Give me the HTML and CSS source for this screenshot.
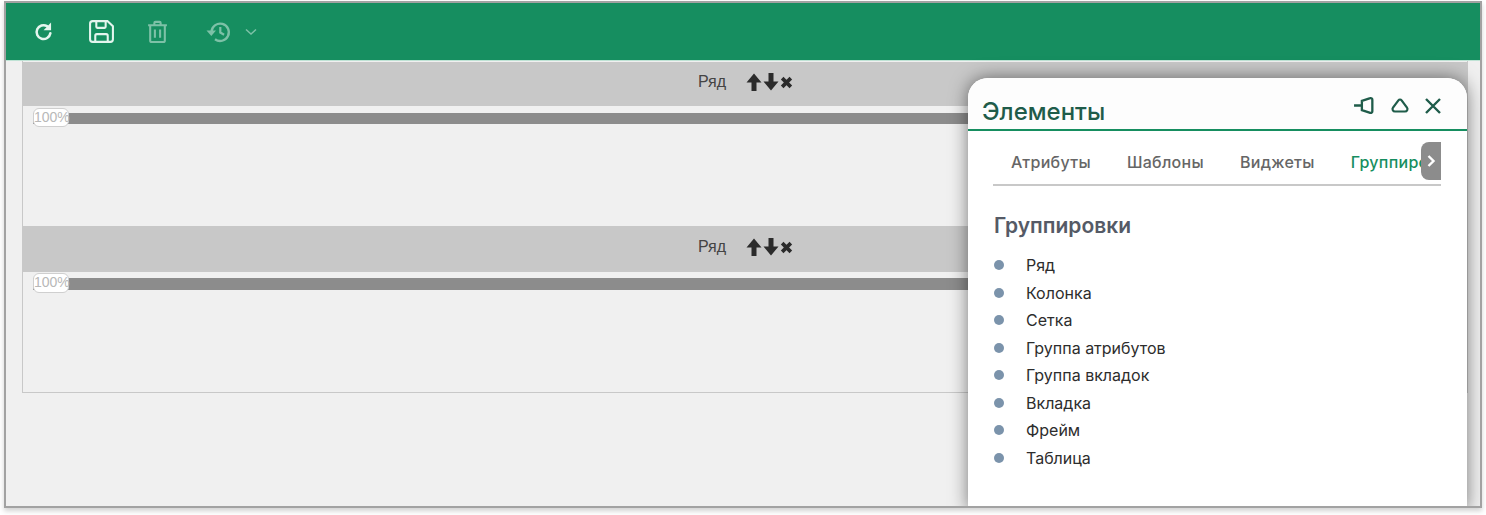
FILE: index.html
```html
<!DOCTYPE html>
<html lang="ru">
<head>
<meta charset="utf-8">
<title>Элементы</title>
<link rel="stylesheet" href="styles.css">
</head>
<body>
<div class="frame">
  <header class="toolbar">
    <svg class="tool tool-refresh" viewBox="0 0 20 20" width="22" height="22"><path d="M15.8 11.2A6.300 6.300 0 1 1 12.800 4.700" fill="none" stroke="currentColor" stroke-width="2.300" stroke-linecap="round"/><path d="M16.400 1.400v7h-6.800z" fill="currentColor"/></svg>
    <svg class="tool tool-save" viewBox="0 0 26 24" width="27" height="25"><path d="M2 4.5A2.5 2.5 0 0 1 4.500 2h14.200L24 7v12.500a2.500 2.500 0 0 1-2.500 2.500h-17A2.500 2.500 0 0 1 2 19.500z M8 2v5.500a1 1 0 0 0 1 1h7a1 1 0 0 0 1-1V2 M7 22v-6a1.500 1.500 0 0 1 1.500-1.500h9A1.500 1.500 0 0 1 19 16v6" fill="none" stroke="currentColor" stroke-width="2"/></svg>
    <svg class="tool tool-dim tool-trash" viewBox="0 0 20 22" width="21" height="23"><path d="M1 5h18M7 5V2.800A1 1 0 0 1 8 1.800h4a1 1 0 0 1 1 1V5M3 5v14.500A1.500 1.500 0 0 0 4.500 21h11a1.500 1.500 0 0 0 1.500-1.500V5M7.500 9v8M12.500 9v8" fill="none" stroke="currentColor" stroke-width="2"/></svg>
    <svg class="tool tool-dim tool-history" viewBox="0 0 26 24" width="26" height="24"><path d="M5.500 11.500A8.700 8.700 0 1 1 9 19.300" fill="none" stroke="currentColor" stroke-width="2.300"/><path d="M0.500 10.500h9.500l-4.700 5.500z" fill="currentColor"/><path d="M14.300 7v5.500l3.800 2.200" fill="none" stroke="currentColor" stroke-width="2.200"/></svg>
    <svg class="tool tool-dim tool-caret" viewBox="0 0 12 8" width="12" height="8"><path d="M1 1.500l5 4.500 5-4.500" fill="none" stroke="currentColor" stroke-width="1.500"/></svg>
  </header>

  <main class="workspace">
    <section class="canvas">
      <div class="row">
        <div class="row-head row-head-first">
          <span class="row-title">Ряд</span>
          <span class="row-actions">
            <svg viewBox="0 0 16 18" width="16" height="18"><path d="M8 0.500L15.500 9.500H10.500V18H5.500V9.500H0.500z" fill="#2b2b2b"/></svg>
            <svg viewBox="0 0 16 18" width="16" height="18"><path d="M5.500 0H10.500V8.500H15.500L8 17.500 0.500 8.500H5.500z" fill="#2b2b2b"/></svg>
            <svg viewBox="0 0 12 12" width="13" height="13"><path d="M2 2l8 8M10 2l-8 8" stroke="#2b2b2b" stroke-width="3.400"/></svg>
          </span>
        </div>
        <div class="row-body row-body-first">
          <div class="bar bar-first"><span class="badge">100%</span></div>
        </div>
      </div>
      <div class="row">
        <div class="row-head">
          <span class="row-title">Ряд</span>
          <span class="row-actions">
            <svg viewBox="0 0 16 18" width="16" height="18"><path d="M8 0.500L15.500 9.500H10.500V18H5.500V9.500H0.500z" fill="#2b2b2b"/></svg>
            <svg viewBox="0 0 16 18" width="16" height="18"><path d="M5.500 0H10.500V8.500H15.500L8 17.500 0.500 8.500H5.500z" fill="#2b2b2b"/></svg>
            <svg viewBox="0 0 12 12" width="13" height="13"><path d="M2 2l8 8M10 2l-8 8" stroke="#2b2b2b" stroke-width="3.400"/></svg>
          </span>
        </div>
        <div class="row-body">
          <div class="bar"><span class="badge badge-second">100%</span></div>
        </div>
      </div>
    </section>
  </main>

  <aside class="panel">
    <div class="panel-head">
      <h2 class="panel-title">Элементы</h2>
      <div class="panel-tools">
        <svg viewBox="0 0 22 20" width="23" height="21"><path d="M1 10h7.500M8.500 5.500L16.500 3a1.500 1.500 0 0 1 2 1.500v11a1.500 1.500 0 0 1-2 1.500L8.500 14.500z" fill="none" stroke="currentColor" stroke-width="2.200"/></svg>
        <svg viewBox="0 0 20 20" width="20" height="20"><path d="M8.400 4.300a2 2 0 0 1 3.200 0l5.400 7.400c1.200 1.700 0 3.800-2 3.800H5c-2 0-3.200-2.100-2-3.800z" fill="none" stroke="currentColor" stroke-width="2.200"/></svg>
        <svg viewBox="0 0 18 18" width="18" height="18"><path d="M2 2l14 14M16 2L2 16" fill="none" stroke="currentColor" stroke-width="2.400"/></svg>
      </div>
    </div>
    <nav class="tabs">
      <span class="tab">Атрибуты</span>
      <span class="tab">Шаблоны</span>
      <span class="tab">Виджеты</span>
      <span class="tab tab-active">Группировки</span>
      <span class="tab-next"><svg viewBox="0 0 10 14" width="10" height="14"><path d="M2.500 2l5 5-5 5" fill="none" stroke="#fff" stroke-width="2.400"/></svg></span>
    </nav>
    <h3 class="section-title">Группировки</h3>
    <ul class="items">
      <li>Ряд</li>
      <li>Колонка</li>
      <li>Сетка</li>
      <li>Группа атрибутов</li>
      <li>Группа вкладок</li>
      <li>Вкладка</li>
      <li>Фрейм</li>
      <li>Таблица</li>
    </ul>
  </aside>
</div>
</body>
</html>
```

FILE: styles.css
```css
* { box-sizing: border-box; }

html, body {
  margin: 0;
  padding: 0;
  height: 515px;
  overflow: hidden;
  background: #fff;
}

body {
  padding: 1px 4px 0;
  font-family: "Inter", sans-serif;
}

.frame {
  position: relative;
  width: 1478px;
  height: 507px;
  border: 2px solid #a2a2a2;
  background: #f0f0f0;
  box-shadow: 0 3px 5px rgba(0, 0, 0, 0.18);
  overflow: hidden;
}

.toolbar {
  display: flex;
  align-items: center;
  height: 58px;
  padding-left: 27px;
  background: #168e60;
  color: #e4f5ee;
  border-bottom: 1px solid #bfe3d5;
}

.tool { flex: none; display: block; }
.tool-dim { opacity: 0.5; }
.tool-save { margin-left: 33px; }
.tool-trash { margin-left: 32px; }
.tool-history { margin-left: 38px; }
.tool-caret { margin-left: 13px; }

.workspace {
  padding: 0 12px 0 16px;
}

.canvas {
  height: 332px;
  border: 1px solid #c8c8c8;
  border-top: 0;
  padding-top: 1px;
}

.row-head {
  display: flex;
  align-items: center;
  justify-content: center;
  gap: 21px;
  height: 46px;
  background: #c8c8c8;
}

.row-head-first { height: 44px; }

.row-title {
  font: 16px/18px "Liberation Sans", sans-serif;
  color: #444;
  transform: translate(1px, -2px);
}

.row-actions {
  display: flex;
  align-items: center;
  gap: 1px;
  transform: translateY(-2px);
}

.row-actions svg { display: block; }

.row-body {
  height: 120px;
  padding: 6px 0 0 10px;
}

.row-body-first { padding-top: 7px; }

.bar {
  height: 12px;
  background: #8c8c8c;
  position: relative;
}

.bar-first { height: 11px; }

.badge {
  position: absolute;
  left: 0;
  top: -5px;
  width: 36px;
  height: 19px;
  border: 1px solid #cfcfcf;
  border-radius: 6px;
  background: #fff;
  color: #b8b8b8;
  font: 14px/17px "Liberation Sans", sans-serif;
  white-space: nowrap;
}

.badge-second { top: -5px; height: 20px; }

.panel {
  position: absolute;
  left: 962px;
  top: 75px;
  width: 499px;
  height: 432px;
  background: #fff;
  border-radius: 20px 20px 0 0;
  box-shadow: 0 0 18px rgba(0, 0, 0, 0.5);
}

.panel-head {
  display: flex;
  align-items: flex-end;
  justify-content: space-between;
  height: 53px;
  padding: 0 25px 0 14px;
  border-bottom: 2px solid #168e60;
  background: #fdfdfd;
  border-radius: 20px 20px 0 0;
}

.panel-title {
  margin: 0;
  font-size: 24px;
  font-weight: 500;
  line-height: 34px;
  color: #1f5c4a;
}

.panel-tools {
  display: flex;
  align-items: center;
  gap: 14px;
  color: #1f5c4a;
  align-self: flex-start;
  padding-top: 17px;
}

.panel-tools svg { display: block; }

.tabs {
  position: relative;
  display: flex;
  width: 448px;
  height: 55px;
  margin-left: 25px;
  border-bottom: 2px solid #c8c8c8;
  overflow: hidden;
}

.tab {
  flex: none;
  padding: 0 18px;
  font-size: 16px;
  font-weight: 500;
  letter-spacing: 0.3px;
  line-height: 62px;
  color: #666;
  white-space: nowrap;
}

.tab-active {
  color: #168e60;
  height: 55px;
  border-bottom: 2px solid #168e60;
}

.tab-next {
  position: absolute;
  right: 0;
  top: 11px;
  width: 20px;
  height: 38px;
  display: flex;
  align-items: center;
  justify-content: center;
  background: #8c8c8c;
  border-radius: 8px 0 0 8px;
}

.section-title {
  margin: 26px 0 0 26px;
  font-size: 21px;
  font-weight: 600;
  line-height: 28px;
  color: #555a66;
}

.items {
  list-style: none;
  margin: 12px 0 0;
  padding: 0 0 0 58px;
}

.items li {
  position: relative;
  font-size: 16px;
  line-height: 27.500px;
  color: #2d2d2d;
}

.items li::before {
  content: "";
  position: absolute;
  left: -32px;
  top: 8px;
  width: 10px;
  height: 10px;
  border-radius: 50%;
  background: #7b93ab;
}
```
